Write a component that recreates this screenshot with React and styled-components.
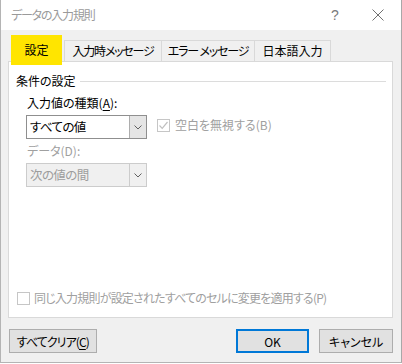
import React from "react";
import styled, { createGlobalStyle } from "styled-components";

const Global = createGlobalStyle`
  html, body {
    margin: 0;
    padding: 0;
    background: #ffffff;
  }
  * {
    box-sizing: border-box;
  }
`;

const Window = styled.div`
  width: 402px;
  height: 363px;
  display: flex;
  flex-direction: column;
  background: #f0f0f0;
  border-left: 1px solid #b4b4b4;
  border-right: 1px solid #a8a8a8;
  border-bottom: 1px solid #b4b4b4;
  font-family: "Noto Sans CJK JP", "Noto Sans", sans-serif;
  font-size: 12px;
  font-feature-settings: "palt";
  color: #000;
  line-height: 16px;
`;

const TitleBar = styled.div`
  height: 30px;
  flex: none;
  display: flex;
  align-items: center;
  background: #ffffff;
  padding-left: 10px;
`;

const Title = styled.span`
  flex: 1;
  color: #9a9a9a;
  font-size: 12px;
  letter-spacing: -1.2px;
`;

const Help = styled.span`
  width: 14px;
  margin-right: 30px;
  color: #7a7a7a;
  font-family: "Liberation Sans", sans-serif;
  font-size: 14px;
  text-align: center;
`;

const CloseIcon = styled.svg`
  width: 12px;
  height: 12px;
  margin-right: 17px;
`;

const Body = styled.div`
  flex: 1;
  display: flex;
  flex-direction: column;
  padding: 10px 8px 0 7px;
`;

const TabStrip = styled.div`
  display: flex;
  align-items: flex-start;
  height: 21px;
  padding-left: 3px;
`;

const Tab = styled.div`
  height: 21px;
  width: ${(p) => p.$w}px;
  margin-left: -1px;
  display: flex;
  align-items: center;
  justify-content: center;
  border: 1px solid #d9d9d9;
  border-bottom: none;
  background: #f0f0f0;
  white-space: nowrap;
  letter-spacing: ${(p) => p.$ls || 0}px;
`;

const ActiveTab = styled.div`
  position: relative;
  z-index: 2;
  width: 51px;
  height: 30px;
  margin-top: -5px;
  margin-right: 3px;
  display: flex;
  align-items: center;
  justify-content: center;
  background: #ffe500;
`;

const Panel = styled.div`
  height: 257px;
  display: flex;
  flex-direction: column;
  background: #ffffff;
  border: 1px solid #d9d9d9;
  padding: 11px 6px 11px 7px;
`;

const GroupHeader = styled.div`
  display: flex;
  align-items: center;
  gap: 4px;
  &::after {
    content: "";
    flex: 1;
    height: 1px;
    background: #dcdcdc;
  }
`;

const Indent = styled.div`
  display: flex;
  flex-direction: column;
  padding-left: 10px;
`;

const FieldLabel = styled.div`
  margin-top: ${(p) => p.$top}px;
  padding-left: 1px;
  color: ${(p) => (p.$disabled ? "#a0a0a0" : "#000")};
`;

const Key = styled.span`
  text-decoration: underline;
  text-underline-offset: 2px;
`;

const Row = styled.div`
  display: flex;
  align-items: flex-start;
  margin-top: 4px;
`;

const Combo = styled.div`
  width: 121px;
  height: 24px;
  display: flex;
  border: 1px solid ${(p) => (p.$disabled ? "#cccccc" : "#8f8f8f")};
  background: ${(p) => (p.$disabled ? "#f0f0f0" : "#ffffff")};
  color: ${(p) => (p.$disabled ? "#9d9d9d" : "#000")};
`;

const ComboText = styled.div`
  flex: 1;
  display: flex;
  align-items: center;
  padding-left: 3px;
  font-size: 12.5px;
  letter-spacing: -0.6px;
`;

const ComboButton = styled.div`
  width: 17px;
  display: flex;
  align-items: center;
  justify-content: center;
  border-left: 1px solid ${(p) => (p.$disabled ? "#cccccc" : "#adadad")};
  background: ${(p) => (p.$disabled ? "#f0f0f0" : "#e5e5e5")};
`;

const Check = styled.div`
  width: 13px;
  height: 13px;
  flex: none;
  display: flex;
  align-items: center;
  justify-content: center;
  border: 1px solid #c6c6c6;
  background: #ffffff;
`;

const CheckField = styled.label`
  display: flex;
  align-items: center;
  gap: ${(p) => p.$gap}px;
  margin-left: ${(p) => p.$left}px;
  margin-top: ${(p) => p.$top || 0}px;
  color: #a0a0a0;
  white-space: nowrap;
  letter-spacing: ${(p) => p.$ls || 0}px;
`;

const BottomCheck = styled(CheckField)`
  margin-top: auto;
`;

const Footer = styled.div`
  display: flex;
  align-items: center;
  gap: 10px;
  margin-top: 11px;
  padding-left: 1px;
`;

const Button = styled.button`
  width: ${(p) => p.$w}px;
  height: 24px;
  padding: 0;
  margin-left: ${(p) => p.$left || 0}px;
  font-family: inherit;
  font-size: 12px;
  font-feature-settings: "palt";
  letter-spacing: ${(p) => p.$ls || 0}px;
  color: #000;
  background: #e1e1e1;
  border: ${(p) => (p.$primary ? "2px solid #0078d7" : "1px solid #adadad")};
`;

const Chevron = () => (
  <svg width="8" height="5" viewBox="0 0 8 5">
    <path d="M0.5 0.5 L4 4 L7.5 0.5" fill="none" stroke="#606060" strokeWidth="1" />
  </svg>
);

const Tick = () => (
  <svg width="11" height="11" viewBox="0 0 11 11">
    <path d="M1.5 5.5 L4.2 8.3 L9.5 2" fill="none" stroke="#c0c0c0" strokeWidth="1.2" />
  </svg>
);

const App = () => {
  return (
    <>
      <Global />
      <Window>
        <TitleBar>
          <Title>データの入力規則</Title>
          <Help>?</Help>
          <CloseIcon viewBox="0 0 12 12">
            <path d="M0.5 0.5 L11.5 11.5 M11.5 0.5 L0.5 11.5" stroke="#707070" strokeWidth="1" />
          </CloseIcon>
        </TitleBar>
        <Body>
          <TabStrip>
            <ActiveTab>設定</ActiveTab>
            <Tab $w={98} $ls={-1.2}>入力時メッセージ</Tab>
            <Tab $w={94} $ls={-1.2}>エラー メッセージ</Tab>
            <Tab $w={77}>日本語入力</Tab>
          </TabStrip>
          <Panel>
            <GroupHeader>条件の設定</GroupHeader>
            <Indent>
              <FieldLabel $top={6}>
                入力値の種類(<Key>A</Key>):
              </FieldLabel>
              <Row>
                <Combo>
                  <ComboText>すべての値</ComboText>
                  <ComboButton>
                    <Chevron />
                  </ComboButton>
                </Combo>
                <CheckField $gap={5} $left={10} $top={2}>
                  <Check>
                    <Tick />
                  </Check>
                  空白を無視する(B)
                </CheckField>
              </Row>
              <FieldLabel $top={4} $disabled>
                データ(D):
              </FieldLabel>
              <Row>
                <Combo $disabled>
                  <ComboText>次の値の間</ComboText>
                  <ComboButton $disabled>
                    <Chevron />
                  </ComboButton>
                </Combo>
              </Row>
            </Indent>
            <BottomCheck $gap={4} $left={1} $ls={-0.8}>
              <Check />
              同じ入力規則が設定されたすべてのセルに変更を適用する(P)
            </BottomCheck>
          </Panel>
          <Footer>
            <Button $w={88} $ls={-0.9}>
              すべてクリア(<Key>C</Key>)
            </Button>
            <Button $w={74} $left={129} $primary>
              OK
            </Button>
            <Button $w={74}>キャンセル</Button>
          </Footer>
        </Body>
      </Window>
    </>
  );
};

export default App;
